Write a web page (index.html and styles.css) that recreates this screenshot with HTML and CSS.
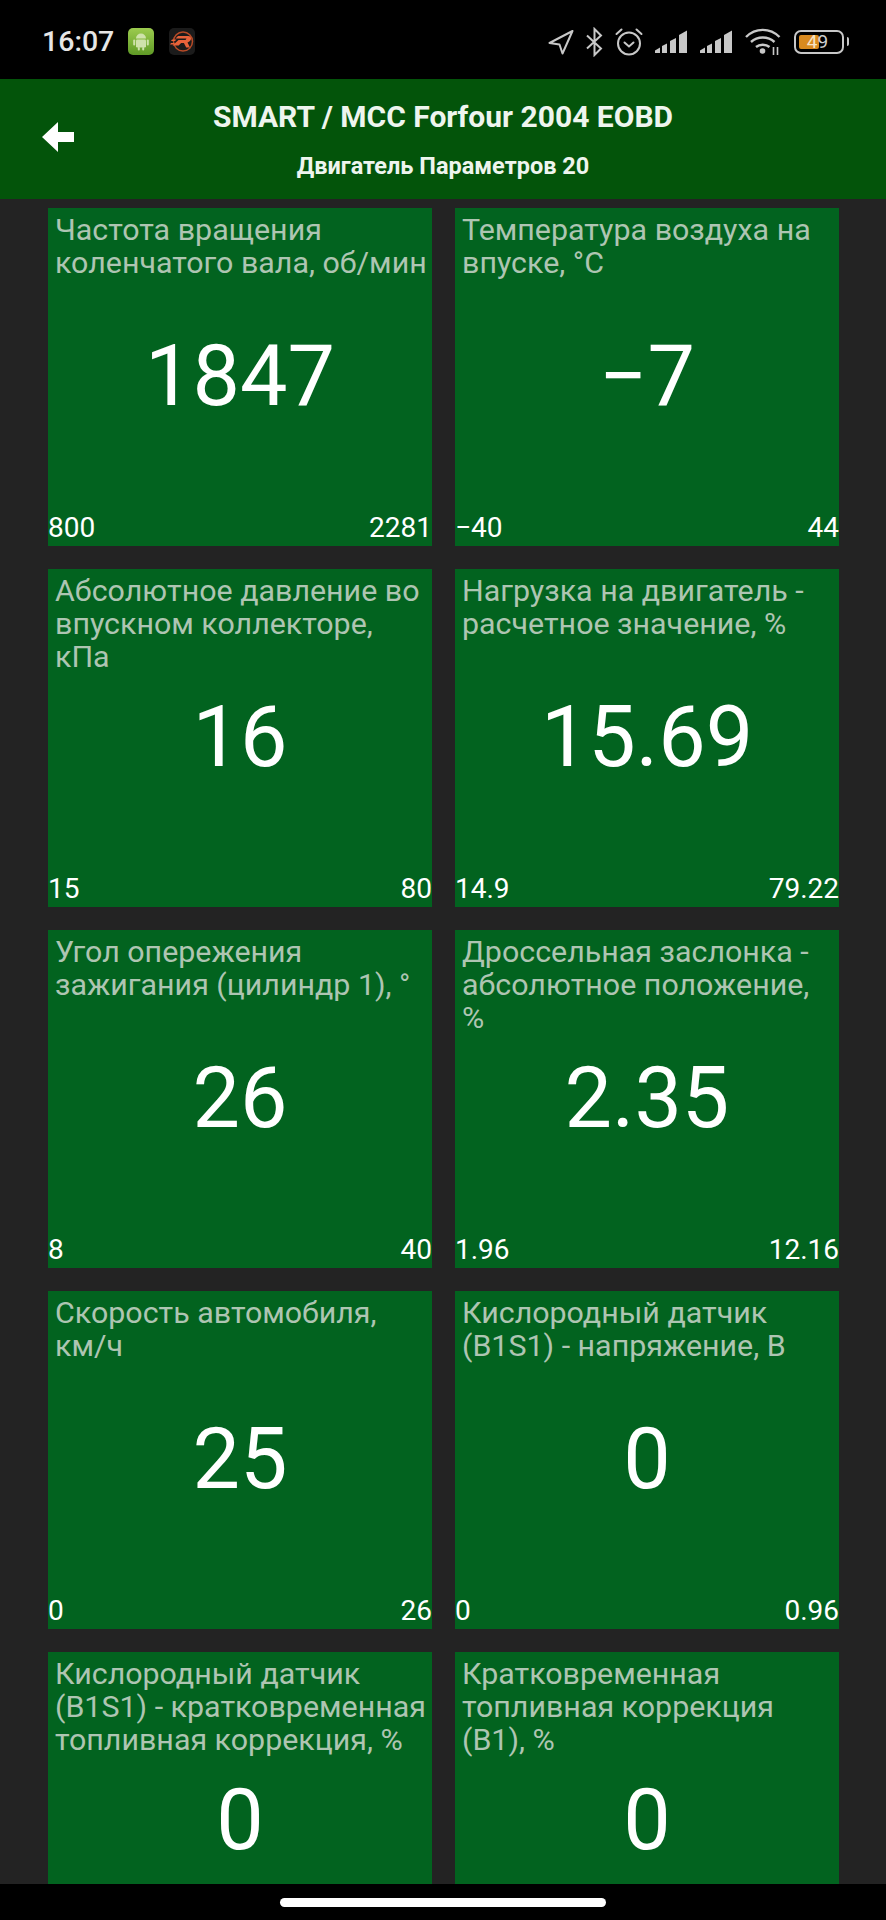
FILE: index.html
```html
<!DOCTYPE html>
<html lang="en">
<head>
    <meta charset="UTF-8">
    <title>Двигатель Параметров</title>
    <link rel="stylesheet" href="styles.css">
</head>
<body>
    <div class="statusBar">
        <span class="clock">16:07</span>
        <svg class="appIcon" width="26" height="27" viewBox="0 0 26 27">
            <defs>
                <linearGradient id="droidBg" x1="0" y1="0" x2="0" y2="1">
                    <stop offset="0" stop-color="#9ccb4e"/>
                    <stop offset="1" stop-color="#5f9a26"/>
                </linearGradient>
            </defs>
            <rect width="26" height="27" rx="5" fill="url(#droidBg)"/>
            <path d="M8 10.500a5 5 0 0 1 10 0z" fill="#cfe2ab"/>
            <rect x="8" y="11.500" width="10" height="8" rx="1.200" fill="#cfe2ab"/>
            <rect x="5.200" y="11.500" width="2" height="6" rx="1" fill="#cfe2ab"/>
            <rect x="18.800" y="11.500" width="2" height="6" rx="1" fill="#cfe2ab"/>
            <rect x="9.800" y="19" width="2" height="3.500" rx="1" fill="#cfe2ab"/>
            <rect x="14.200" y="19" width="2" height="3.500" rx="1" fill="#cfe2ab"/>
        </svg>
        <svg class="appIcon" width="26" height="27" viewBox="0 0 26 27">
            <rect width="26" height="27" rx="5" fill="#1b1b1b"/>
            <circle cx="14" cy="13.500" r="9.500" fill="none" stroke="#b84a26" stroke-width="1.500"/>
            <path d="M9 8h10.500c3 0 3.500 4 .8 5.500l-1.800 1 2.500 5h-3.800l-2.300-4.500h-2.800l-2.500 2.500H3.500l6-5.500h7l1-1.500H6.500z" fill="#e8623a"/>
            <path d="M3 11.500h4.500L6 13H2zM2 15h4L4.500 16.500H1z" fill="#e8623a"/>
        </svg>
        <div class="statusIcons">
            <svg width="26" height="26" viewBox="0 0 26 26" fill="none" stroke="#c8c8c8" stroke-width="2" stroke-linejoin="round">
                <path d="M24.500 2L1.500 14l10 1.500 3 9z"/>
            </svg>
            <svg width="17" height="30" viewBox="0 0 17 30" fill="none" stroke="#c8c8c8" stroke-width="2">
                <path d="M1 8.500l14 13-6.500 6.500V2L15 8.500 1 21.500"/>
            </svg>
            <svg width="28" height="28" viewBox="0 0 28 28" fill="none" stroke="#c8c8c8" stroke-width="2" stroke-linecap="round">
                <circle cx="14" cy="15.500" r="11"/>
                <path d="M9.500 14.500l4.500 4 4.500-4"/>
                <path d="M1.500 6l5-4.500M26.500 6l-5-4.500"/>
            </svg>
            <svg width="33" height="24" viewBox="0 0 33 24" fill="#c8c8c8">
                <path d="M0 23v-2.500l5-3V23z"/>
                <path d="M7 23v-7l5-2.500V23z"/>
                <path d="M15 23V11l6-3v15z"/>
                <path d="M24 23V5l8-4.500V23z"/>
            </svg>
            <svg width="33" height="24" viewBox="0 0 33 24" fill="#c8c8c8">
                <path d="M0 23v-2.500l5-3V23z"/>
                <path d="M7 23v-7l5-2.500V23z"/>
                <path d="M15 23V11l6-3v15z"/>
                <path d="M24 23V5l8-4.500V23z"/>
            </svg>
            <svg width="37" height="28" viewBox="0 0 37 28" fill="none" stroke="#c8c8c8" stroke-width="2.400">
                <path d="M1 9c9.500-9.500 24-9.500 33.500 0"/>
                <path d="M6 14c6.500-6 17-6 23.500 0"/>
                <path d="M11 19c3.500-3 10-3 13.500 0"/>
                <circle cx="17.500" cy="23" r="2.800" fill="#c8c8c8" stroke="none"/>
                <path d="M28.500 19v8M32.500 19v8" stroke-width="1.600"/>
            </svg>
            <div class="battery">
                <div class="batteryBody">
                    <div class="batteryFill"></div>
                    <span class="batteryText"><span class="batteryLit">4</span>9</span>
                </div>
                <div class="batteryCap"></div>
            </div>
        </div>
    </div>

    <div class="topBar">
        <svg class="backArrow" width="32" height="30" viewBox="0 0 32 30">
            <path d="M0 15L16 0v10h16v10H16v10z" fill="#ffffff"/>
        </svg>
        <div class="titles">
            <div class="title">SMART / MCC Forfour 2004 EOBD</div>
            <div class="subtitle">Двигатель Параметров 20</div>
        </div>
    </div>

    <div class="content">
        <div class="grid">
            <div class="card">
                <div class="label">Частота вращения коленчатого вала, об/мин</div>
                <div class="value">1847</div>
                <div class="range"><span>800</span><span>2281</span></div>
            </div>
            <div class="card">
                <div class="label">Температура воздуха на впуске, °С</div>
                <div class="value">−7</div>
                <div class="range"><span>−40</span><span>44</span></div>
            </div>
            <div class="card">
                <div class="label">Абсолютное давление во впускном коллекторе, кПа</div>
                <div class="value">16</div>
                <div class="range"><span>15</span><span>80</span></div>
            </div>
            <div class="card">
                <div class="label">Нагрузка на двигатель - расчетное значение, %</div>
                <div class="value">15.69</div>
                <div class="range"><span>14.9</span><span>79.22</span></div>
            </div>
            <div class="card">
                <div class="label">Угол опережения зажигания (цилиндр 1), °</div>
                <div class="value">26</div>
                <div class="range"><span>8</span><span>40</span></div>
            </div>
            <div class="card">
                <div class="label">Дроссельная заслонка - абсолютное положение, %</div>
                <div class="value">2.35</div>
                <div class="range"><span>1.96</span><span>12.16</span></div>
            </div>
            <div class="card">
                <div class="label">Скорость автомобиля, км/ч</div>
                <div class="value">25</div>
                <div class="range"><span>0</span><span>26</span></div>
            </div>
            <div class="card">
                <div class="label">Кислородный датчик (B1S1) - напряжение, В</div>
                <div class="value">0</div>
                <div class="range"><span>0</span><span>0.96</span></div>
            </div>
            <div class="card">
                <div class="label">Кислородный датчик (B1S1) - кратковременная топливная коррекция, %</div>
                <div class="value">0</div>
            </div>
            <div class="card">
                <div class="label">Кратковременная топливная коррекция (B1), %</div>
                <div class="value">0</div>
            </div>
        </div>
    </div>

    <div class="navBar">
        <div class="homeBar"></div>
    </div>
</body>
</html>
```

FILE: styles.css
```css
* { box-sizing: border-box; }

body {
  margin: 0;
  height: 1920px;
  display: flex;
  flex-direction: column;
  overflow: hidden;
  background: #232323;
  font-family: Roboto, "Noto Sans", sans-serif;
  color: #ffffff;
}

/* Status bar */
.statusBar {
  height: 79px;
  flex: none;
  background: #000000;
  display: flex;
  align-items: center;
  padding: 4px 0 0 42px;
  color: #e6e6e6;
}

.clock {
  font-size: 28.5px;
  font-weight: 500;
  margin-right: 14px;
}

.appIcon { margin-right: 15px; }

.statusIcons {
  margin-left: auto;
  margin-right: 37px;
  display: flex;
  align-items: center;
  gap: 12px;
}

.battery {
  display: flex;
  align-items: center;
  gap: 3px;
}

.batteryBody {
  position: relative;
  width: 50px;
  height: 24px;
  border: 2.500px solid #c8c8c8;
  border-radius: 7px;
}

.batteryFill {
  position: absolute;
  left: 3px;
  top: 3px;
  bottom: 3px;
  width: 20px;
  background: #d98a1f;
  border-radius: 2px;
}

.batteryText {
  position: absolute;
  left: 0;
  right: 3px;
  top: 0;
  bottom: 0;
  display: flex;
  align-items: center;
  justify-content: center;
  font-size: 19px;
  line-height: 1;
  color: #d0d0d0;
}

.batteryLit { color: #f5e3c5; }

.batteryCap {
  width: 2px;
  height: 9px;
  background: #c8c8c8;
  border-radius: 0 2px 2px 0;
}

/* Header */
.topBar {
  height: 120px;
  flex: none;
  background: #03540a;
  display: flex;
  align-items: center;
  position: relative;
}

.backArrow {
  position: absolute;
  left: 42px;
  top: 43px;
}

.titles {
  width: 100%;
  text-align: center;
}

.title {
  font-size: 30px;
  font-weight: 700;
  line-height: 36px;
  color: #eef5ee;
}

.subtitle {
  font-size: 23.500px;
  font-weight: 700;
  line-height: 28px;
  color: #eef5ee;
  margin-top: 17px;
}

/* Tiles */
.content {
  flex: 1;
  min-height: 0;
  overflow: hidden;
  padding: 9px 47px 0 48px;
}

.grid {
  display: grid;
  grid-template-columns: 384px 384px;
  column-gap: 23px;
  row-gap: 23px;
}

.card {
  height: 338px;
  background: #02631f;
  display: grid;
}

.label, .value, .range {
  grid-area: 1 / 1;
}

.label {
  font-size: 30.400px;
  line-height: 33px;
  color: #aec5b2;
  padding: 5px 0 0 7px;
}

.value {
  align-self: center;
  justify-self: center;
  font-size: 84.500px;
  line-height: 1;
}

.range {
  align-self: end;
  display: flex;
  justify-content: space-between;
  font-size: 28px;
  line-height: 32px;
  padding-bottom: 2px;
}

/* Navigation */
.navBar {
  height: 36px;
  flex: none;
  background: #000000;
  display: flex;
  justify-content: center;
  padding-top: 14px;
}

.homeBar {
  width: 326px;
  height: 9px;
  background: #ffffff;
  border-radius: 5px;
}
```
